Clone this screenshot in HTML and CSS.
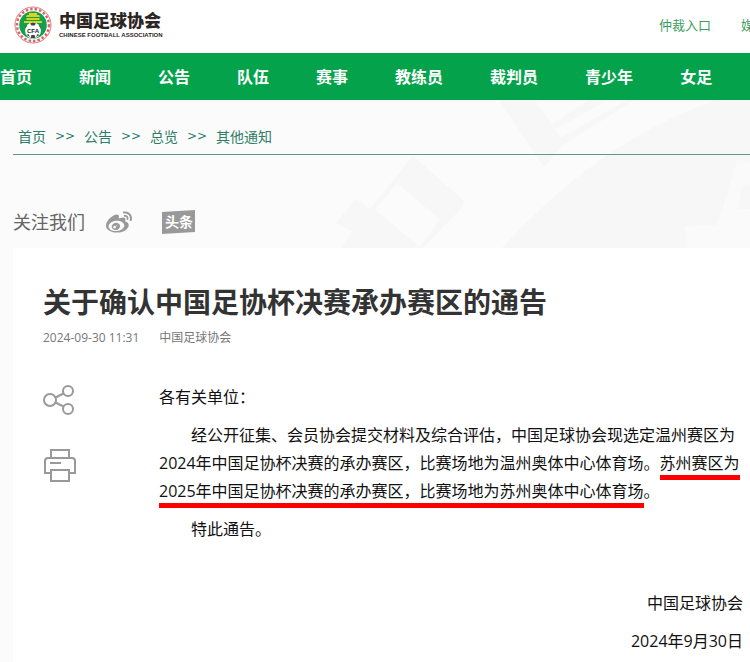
FILE: index.html
```
<!DOCTYPE html>
<html lang="zh-CN">
<head>
    <meta charset="UTF-8">
    <meta name="viewport" content="width=device-width, initial-scale=1.0">
    <title>关于确认中国足协杯决赛承办赛区的通告</title>
    <link rel="stylesheet" href="styles.css">
</head>
<body>
    <header class="header">
        <a class="logo" href="#">
            <svg class="logo-badge" viewBox="0 0 38 38" aria-hidden="true">
                <circle cx="19" cy="19" r="18" fill="#fff" stroke="#dc7b80"/>
                <circle cx="19" cy="19" r="16" fill="none" stroke="#dc6469" stroke-width="2.500" stroke-dasharray="2.500 2"/>
                <circle cx="19" cy="19" r="13.800" fill="#12a04f"/>
                <path d="M13 9h2V7h8v2h2l1 2H12zM12.500 12h13v2h-13zM10 15h18v2H10z" fill="#d9d51c"/>
                <circle cx="19" cy="24.500" r="8" fill="#fff"/>
                <path d="M16 17.500l3-1 3 1-1.500 2h-3zM11 23l2-3-1-1M27 23l-2-3 1-1M12.500 29l2-1 1.500 3M25.500 29l-2-1-1.500 3M17.500 29h3l1 3h-5z" fill="#444"/>
                <text class="badge-text" x="19" y="27" text-anchor="middle">CFA</text>
            </svg>
            <span class="logo-name">
                <span class="logo-cn">中国足球协会</span>
                <span class="logo-en">CHINESE FOOTBALL ASSOCIATION</span>
            </span>
        </a>
        <div class="top-links">
            <a href="#">仲裁入口</a>
            <a href="#">媒体</a>
        </div>
    </header>

    <nav class="nav">
        <a href="#">首页</a>
        <a href="#">新闻</a>
        <a href="#">公告</a>
        <a href="#">队伍</a>
        <a href="#">赛事</a>
        <a href="#">教练员</a>
        <a href="#">裁判员</a>
        <a href="#">青少年</a>
        <a href="#">女足</a>
    </nav>

    <main class="content">
        <!-- Watermark -->
        <svg class="watermark" viewBox="0 0 450 148" aria-hidden="true">
            <g fill="#f7f7f7">
                <path d="M199 0h36l26 38 36-21 30-17h-19l-52 29-4-5 36-24h46l-72 46-18 21z"/>
                <path d="M415 0C320 35 255 90 202 148h248V0z"/>
                <path d="M113 56l51 45-2 6-39 41H42l10-17-16-8 20-24 14 10z"/>
            </g>
            <path d="M97 83l43 36-20 28-45-37z" fill="#fbfbfb"/>
            <path d="M437 60l13 2v22l-8 2-4 23h12v39h-62l-4-22 32-1 6-14z" fill="#fafafa"/>
        </svg>

        <div class="breadcrumb">
            <a href="#">首页</a>
            <span class="sep">&gt;&gt;</span>
            <a href="#">公告</a>
            <span class="sep">&gt;&gt;</span>
            <a href="#">总览</a>
            <span class="sep">&gt;&gt;</span>
            <a href="#">其他通知</a>
        </div>

        <div class="follow">
            <span>关注我们</span>
            <a class="weibo" href="#" aria-label="微博">
                <svg viewBox="0 0 24 24" width="26" height="26">
                    <path fill="#999" d="M10.098 20.323c-3.977.391-7.414-1.406-7.672-4.02-.259-2.609 2.759-5.047 6.74-5.441 3.979-.394 7.413 1.404 7.671 4.018.259 2.6-2.759 5.049-6.737 5.439l-.002.004zM9.05 17.219c-.384.616-1.208.884-1.829.602-.612-.279-.793-.991-.406-1.593.379-.595 1.176-.861 1.793-.601.622.263.82.972.442 1.592zm1.27-1.627c-.141.237-.449.353-.689.253-.236-.09-.313-.361-.177-.586.138-.227.436-.346.672-.24.239.09.315.36.18.601l.014-.028zm.176-2.719c-1.893-.493-4.033.45-4.857 2.118-.836 1.704-.026 3.591 1.886 4.21 1.983.64 4.318-.341 5.132-2.179.8-1.793-.201-3.642-2.161-4.149zm7.563-1.224c-.346-.105-.57-.18-.405-.615.375-.977.42-1.804 0-2.404-.781-1.112-2.915-1.053-5.364-.03 0 0-.766.331-.571-.271.376-1.217.315-2.224-.27-2.809-1.338-1.337-4.869.045-7.888 3.08C1.309 10.87 0 13.273 0 15.348c0 3.981 5.099 6.395 10.086 6.395 6.536 0 10.888-3.801 10.888-6.82 0-1.822-1.547-2.854-2.915-3.284v.01zm1.908-5.092c-.766-.856-1.908-1.187-2.96-.962-.436.09-.706.511-.616.932.09.42.511.691.932.602.511-.105 1.067.044 1.442.465.376.421.466.977.316 1.473-.136.406.089.856.51.992.405.119.857-.105.992-.512.33-1.021.12-2.178-.646-3.035l.03.045zm2.418-2.195c-1.576-1.757-3.905-2.419-6.054-1.968-.496.104-.812.587-.706 1.081.104.496.586.813 1.082.707 1.532-.331 3.185.15 4.296 1.383 1.112 1.246 1.429 2.943.947 4.416-.165.48.106 1.007.586 1.157.479.165.991-.104 1.157-.586.675-2.088.241-4.478-1.338-6.235l.03.045z"/>
                </svg>
            </a>
            <a class="toutiao" href="#">
                <svg viewBox="0 0 33 24" width="33" height="24">
                    <path d="M0 2L33 0v22L0 24z" fill="#999"/>
                    <text class="toutiao-text" x="17" y="17" text-anchor="middle">头条</text>
                </svg>
            </a>
        </div>

        <article class="article">
            <h1>关于确认中国足协杯决赛承办赛区的通告</h1>
            <div class="meta">
                <span>2024-09-30 11:31</span>
                <span>中国足球协会</span>
            </div>
            <div class="article-main">
                <div class="tools">
                    <button type="button" aria-label="分享">
                        <svg viewBox="0 0 34 34" width="34" height="34" fill="none" stroke="#999" stroke-width="2">
                            <circle cx="7" cy="17" r="6"/>
                            <circle cx="25" cy="8" r="5"/>
                            <circle cx="25" cy="26" r="5"/>
                            <path d="M12.500 14.500l8-4M12.500 19.500l8 4"/>
                        </svg>
                    </button>
                    <button type="button" aria-label="打印">
                        <svg viewBox="0 0 34 34" width="34" height="34" fill="none" stroke="#999" stroke-width="2">
                            <path d="M8 9V1h18v8M8 24H2V12q0-3 3-3h24q3 0 3 3v12h-6M8 21h18v11H8zM7 14h11"/>
                        </svg>
                    </button>
                </div>
                <div class="text">
                    <p class="to">各有关单位：</p>
                    <p>经公开征集、会员协会提交材料及综合评估，中国足球协会现选定温州赛区为2024年中国足协杯决赛的承办赛区，比赛场地为温州奥体中心体育场。<span class="mark">苏州赛区为2025年中国足协杯决赛的承办赛区，比赛场地为苏州奥体中心体育场</span>。</p>
                    <p>特此通告。</p>
                    <p class="sign">中国足球协会</p>
                    <p class="date">2024年9月30日</p>
                </div>
            </div>
        </article>
    </main>
</body>
</html>
```

FILE: styles.css
```
* {
    box-sizing: border-box;
}
body {
    margin: 0;
    font-family: "Open Sans", "Noto Sans CJK SC", sans-serif;
    color: #111;
    background-color: #fff;
    overflow-x: hidden;
}
a {
    color: inherit;
    text-decoration: none;
}
svg {
    display: block;
}

/* Header */
.header {
    display: flex;
    align-items: center;
    justify-content: space-between;
    height: 53px;
    padding: 0 0 4px 14px;
    overflow: hidden;
}
.logo {
    display: flex;
    align-items: center;
    gap: 7px;
    color: #2b2523;
}
.logo-badge {
    width: 38px;
    height: 38px;
}
.badge-text {
    font: bold 6px "Liberation Sans", sans-serif;
    fill: #222;
}
.logo-name {
    display: flex;
    flex-direction: column;
    white-space: nowrap;
}
.logo-cn {
    font-size: 17px;
    font-weight: 900;
    line-height: 20px;
}
.logo-en {
    font: bold 6px/8px "Liberation Sans", sans-serif;
}
.top-links {
    display: flex;
    flex: 0 0 91px;
    gap: 30px;
    min-width: 0;
    font-size: 13px;
    white-space: nowrap;
    color: #3b9d62;
}

/* Main navigation */
.nav {
    display: flex;
    gap: 47px;
    height: 47px;
    line-height: 48px;
    overflow: hidden;
    white-space: nowrap;
    font-size: 16px;
    font-weight: bold;
    color: #fff;
    background-color: #03a24b;
}

.content {
    position: relative;
    z-index: 0;
    padding-left: 13px;
    background-color: #fbfbfb;
}
.watermark {
    position: absolute;
    z-index: -1;
    top: 0;
    right: 0;
    width: 450px;
    height: 148px;
}
.breadcrumb {
    display: flex;
    align-items: center;
    height: 55px;
    padding: 18px 5px 0;
    font-size: 14px;
    color: #2f7d68;
    border-bottom: 1px solid #5c9b88;
}
.sep {
    width: 38px;
    text-align: center;
    font-family: "DejaVu Sans", sans-serif;
    font-size: 12px;
}
.follow {
    display: flex;
    align-items: center;
    height: 93px;
    padding-top: 40px;
    font-size: 18px;
    line-height: 24px;
    color: #666;
}
.weibo {
    margin-left: 21px;
}
.toutiao {
    margin-left: 30px;
}
.toutiao-text {
    font-size: 14px;
    font-weight: bold;
    fill: #fff;
}

/* Article */
.article {
    padding: 34px 7px 8px 30px;
    background-color: #fff;
}
h1 {
    margin: 0;
    font-size: 28px;
    line-height: 40px;
    color: #333;
}
.meta {
    display: flex;
    gap: 20px;
    margin-top: 6px;
    font-size: 12px;
    line-height: 20px;
    color: #777;
}
.article-main {
    display: flex;
    margin-top: 35px;
}
.tools {
    display: flex;
    flex: 0 0 116px;
    flex-direction: column;
    align-items: flex-start;
    gap: 32px;
}
.tools button {
    padding: 0;
    border: none;
    background: none;
    cursor: pointer;
}
.text {
    flex: 1;
    font-size: 16px;
    line-height: 28px;
}
.text p {
    margin: 0 0 10px;
    text-indent: 32px;
}
.text .to {
    text-indent: 0;
}
.mark {
    padding-bottom: 1px;
    border-bottom: 5px solid #f00;
}
.text .sign,
.text .date {
    text-align: right;
}
.text .sign {
    margin-top: 46px;
}
```
